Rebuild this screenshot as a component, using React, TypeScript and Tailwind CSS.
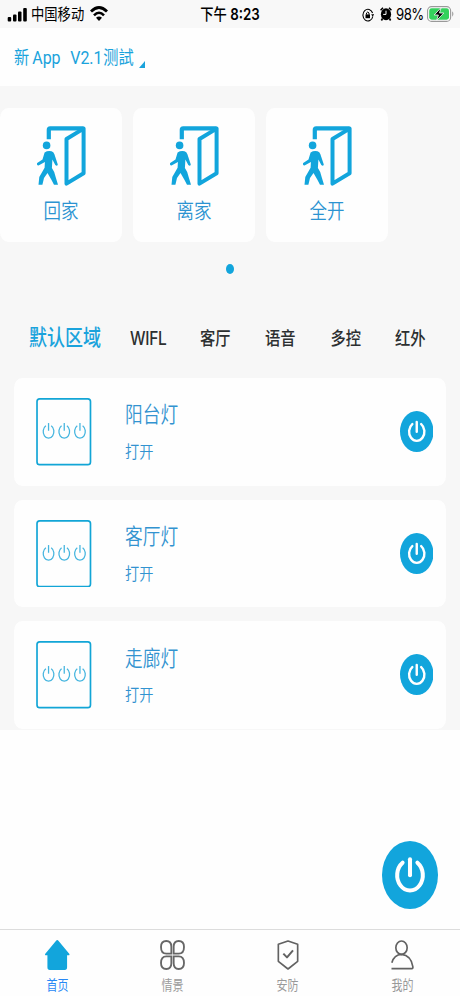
import type { ReactNode } from "react";
import clsx from "clsx";

const escenas = ["回家", "离家", "全开"];

const zonas = [
  { nombre: "WIFL", className: "left-[130px] text-[15.5px] tracking-[-0.3px]" },
  { nombre: "客厅", className: "left-[200px] text-[15.3px]" },
  { nombre: "语音", className: "left-[265px] text-[15.3px]" },
  { nombre: "多控", className: "left-[330.5px] text-[15.3px]" },
  { nombre: "红外", className: "left-[395px] text-[15.3px]" },
];

const luces = ["阳台灯", "客厅灯", "走廊灯"];

// Tall, narrow lettering used across the whole app
function Txt({ children, className }: { children: ReactNode; className?: string }) {
  return (
    <span className={clsx("block origin-center scale-y-[1.2] leading-none whitespace-pre", className)}>
      {children}
    </span>
  );
}

function DoorIcon() {
  return (
    <svg viewBox="0 0 49 60" className="h-[60px] w-[49px]" fill="#12a5dc">
      <path d="M11.8 13.3V3.8Q11.8 2.4 13.2 2.4H46.5" fill="none" stroke="#12a5dc" strokeWidth="4.2" />
      <path
        d="M29.5 13L46.6 2.6V47.3L29.5 57.6Z"
        fill="none"
        stroke="#12a5dc"
        strokeWidth="4"
        strokeLinejoin="round"
      />
      <circle cx="9.6" cy="19.4" r="3.8" />
      <path d="M7.6 26.4Q10.6 24.4 14.5 25.2Q16.6 25.8 17.4 28.3L20.8 38.5Q20.2 40.6 18.3 39L15.4 33.5L14.9 42Q18 46 18.8 51.5L21 58.8H17L14.4 53.8L10.5 47L7 52L5.4 58.8H1.5L2.3 51L7.6 41.8L7.9 36L1.5 39.6Q-.7 39 .2 37L5.5 33.4Z" />
    </svg>
  );
}

function PowerIcon({ className }: { className: string }) {
  return (
    <svg viewBox="0 0 166 204" preserveAspectRatio="none" className={className}>
      <ellipse cx="83" cy="102" rx="83" ry="102" fill="#12a5dc" />
      <g fill="none" stroke="#fff" strokeWidth="12" strokeLinecap="round">
        <path d="M61 65A38 46 0 1 0 105 65" />
        <path d="M83 55V103" />
      </g>
    </svg>
  );
}

function SwitchIcon() {
  return (
    <svg viewBox="0 0 165 202" className="h-[67.5px] w-[55.5px] shrink-0" fill="none">
      <rect x="2.5" y="2.5" width="160" height="197" rx="8" stroke="#12a5d6" strokeWidth="5" />
      {[37, 84, 131].map((x) => (
        <g key={x} transform={`translate(${x} 101)`} stroke="#45b5df" strokeWidth="3.8">
          <path d="M-8 -18A16 20 0 1 0 8 -18" />
          <path d="M0 -26V-3" />
        </g>
      ))}
    </svg>
  );
}

function StatusBar() {
  return (
    <div className="relative flex h-7 items-center bg-[#f8f8f8] text-black">
      <svg viewBox="0 0 20 15" className="ml-[7px] h-[15px] w-5">
        <rect x="0.7" y="10" width="3.5" height="4.5" rx="1" />
        <rect x="6" y="7.5" width="3.5" height="7" rx="1" />
        <rect x="11" y="4.5" width="3.5" height="10" rx="1" />
        <rect x="16.2" y="1" width="3.6" height="13.5" rx="1" />
      </svg>
      <Txt className="mt-[2px] ml-1 text-[13.3px]">中国移动</Txt>
      <svg viewBox="0 0 18 16" className="ml-[6px] h-4 w-[18px]" fill="none" stroke="#000">
        <path d="M1 5.6Q9 -2.4 17 5.6" strokeWidth="2.8" />
        <path d="M4 9.3Q9 4.2 14 9.3" strokeWidth="2.6" />
        <path d="M9 15L6 11.8Q9 9 12 11.8Z" fill="#000" stroke="none" />
      </svg>
      <div className="absolute inset-x-0 flex justify-center">
        <Txt className="mt-[2px] text-[13.3px] font-medium">
          下午 <span className="font-semibold">8:23</span>
        </Txt>
      </div>
      <div className="mr-[6px] ml-auto flex items-center">
        <svg viewBox="0 0 12 14" className="mt-px h-[14px] w-3" fill="none" stroke="#000">
          <path d="M10.8 8.5A5 5.9 0 1 1 10.6 5" strokeWidth="1.1" />
          <path d="M9.2 6.2H12.2L10.7 8.7Z" fill="#000" stroke="none" />
          <rect x="3.5" y="6.4" width="4.5" height="3.8" fill="#000" stroke="none" />
          <path d="M4.5 6.5V5Q5.8 3 7 5V6.5" strokeWidth="1" />
        </svg>
        <svg viewBox="0 0 12 14" className="ml-[6px] h-[14px] w-3">
          <ellipse cx="6" cy="7.2" rx="5.1" ry="6" />
          <path d="M.6 3.2L3 .8M11.4 3.2L9 .8M2.5 11.5L1.4 13.5M9.5 11.5L10.6 13.5" stroke="#000" strokeWidth="1.6" />
          <path d="M6 3.7V7.4H3.2" fill="none" stroke="#fff" strokeWidth="1" />
        </svg>
        <Txt className="mt-[2px] ml-[4px] w-[28px] text-[13.2px] tracking-[-0.5px]">98%</Txt>
        <svg viewBox="0 0 27 16" className="ml-[3px] h-4 w-[27px]">
          <rect x="0.6" y="0.6" width="23" height="14.8" rx="4" fill="#fff" stroke="#999" strokeWidth="1.1" />
          <rect x="2.2" y="2.3" width="19.8" height="11.4" rx="2.4" fill="#34d15c" />
          <path d="M25 5.3Q28 8 25 10.7Z" fill="#aaa" />
          <path d="M14.2 1.5L7.2 9H11.4L9.6 14.5L16.8 7H12.5Z" fill="#000" stroke="#fff" strokeWidth="0.8" />
        </svg>
      </div>
    </div>
  );
}

function NavItem({ label, active, children }: { label: string; active?: boolean; children: ReactNode }) {
  return (
    <div className="flex flex-1 flex-col items-center pt-[10px]">
      {children}
      <Txt className={clsx("mt-[10px] text-[11px]", active ? "text-[#2788f5]" : "text-[#999]")}>{label}</Txt>
    </div>
  );
}

export default function App() {
  return (
    <div
      lang="zh-CN"
      className="relative flex h-[996px] w-[460px] flex-col overflow-hidden bg-[#fefefe] font-['Inter','Noto_Sans_CJK_SC',sans-serif]"
    >
      <StatusBar />

      <header className="flex h-[58px] items-center pt-[2px] pl-[14px] text-[#1aa3dc]">
        <Txt className="text-[15.2px]">新</Txt>
        <Txt className="ml-[3px] w-[38px] font-['Roboto'] text-[16px]">App</Txt>
        <Txt className="w-[33px] font-['Roboto'] text-[16px]">V2.1</Txt>
        <Txt className="text-[15.2px]">测試</Txt>
        <svg viewBox="0 0 6 7" className="mt-3 ml-[5px] h-[7px] w-[6px]">
          <path d="M6 0V7H0Z" fill="#1aa3dc" />
        </svg>
      </header>

      <main className="h-[644px] bg-[#f7f7f7] pt-[22px]">
        <div className="flex gap-[11px]">
          {escenas.map((escena) => (
            <div
              key={escena}
              className="flex h-[134px] w-[122px] flex-col items-center rounded-[8px/10px] bg-[#fefefe] pt-[18px]"
            >
              <DoorIcon />
              <Txt className="mt-[16px] text-[17.5px] font-[350] text-[#2b93d1]">{escena}</Txt>
            </div>
          ))}
        </div>
        <div className="mx-auto mt-[22px] h-[10px] w-2 rounded-[50%] bg-[#12a5dc]" />

        <div className="relative mt-[23px] h-[81px]">
          <Txt className="absolute top-[32px] left-[29px] text-[18px] font-medium text-[#1aa3dc]">默认区域</Txt>
          {zonas.map(({ nombre, className }) => (
            <Txt key={nombre} className={clsx("absolute top-[34px] font-medium text-[#2c2f30]", className)}>
              {nombre}
            </Txt>
          ))}
        </div>

        <div className="flex flex-col gap-[14px] px-[14px]">
          {luces.map((luz) => (
            <div
              key={luz}
              className="flex h-[107.7px] items-center rounded-[8px/10px] bg-[#fefefe] pr-[13px] pl-[22px]"
            >
              <SwitchIcon />
              <div className="mt-[2px] ml-[33.5px] flex flex-col gap-[21px] text-[#3293d0]">
                <Txt className="text-[17.7px] font-[350]">{luz}</Txt>
                <Txt className="text-[14.2px] font-[350]">打开</Txt>
              </div>
              <PowerIcon className="mb-px ml-auto h-[41px] w-[33.5px]" />
            </div>
          ))}
        </div>
      </main>

      <PowerIcon className="absolute top-[841px] left-[382px] h-[68px] w-[56px]" />

      <nav className="mt-auto flex h-[67px] border-t border-[#dcdcdc]">
        <NavItem label="首页" active>
          <svg viewBox="0 0 73 90" className="h-[30px] w-[24.5px]" fill="#12a5dc">
            <path d="M33 2Q36.5 -2 40 2L73 42Q74 46 70 46H66V82Q66 90 59 90H14Q7 90 7 82V46H3Q-1 46 0 42Z" />
          </svg>
        </NavItem>
        <NavItem label="情景">
          <svg viewBox="0 0 75 90" className="h-[30px] w-[25px]" fill="none" stroke="#666" strokeWidth="5.5">
            <path d="M34 41V20Q34 3 19 3Q3 3 3 21Q3 41 19 41Z" />
            <path d="M41 41V20Q41 3 56 3Q72 3 72 21Q72 41 56 41Z" />
            <path d="M34 49V70Q34 87 19 87Q3 87 3 69Q3 49 19 49Z" />
            <path d="M41 49V70Q41 87 56 87Q72 87 72 69Q72 49 56 49Z" />
          </svg>
        </NavItem>
        <NavItem label="安防">
          <svg
            viewBox="0 0 66 90"
            className="h-[30px] w-[22px]"
            fill="none"
            stroke="#626262"
            strokeWidth="5"
            strokeLinejoin="round"
          >
            <path d="M33 3L62 13V64L33 87L4 64V13Z" />
            <path d="M19 41L30 52L48 31" strokeWidth="6" />
          </svg>
        </NavItem>
        <NavItem label="我的">
          <svg viewBox="0 0 68 90" className="h-[30px] w-[23px]" fill="none" stroke="#626262" strokeWidth="5">
            <ellipse cx="31" cy="23" rx="17" ry="20" />
            <path d="M2 68Q9 44 31 43Q60 46 65 80Q66 86 62 86H1" />
          </svg>
        </NavItem>
      </nav>
    </div>
  );
}
